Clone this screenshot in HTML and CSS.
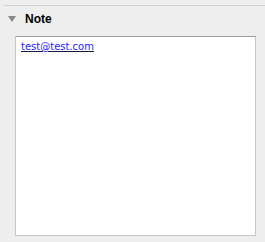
FILE: index.html
```html
<!DOCTYPE html>
<html lang="en">

<head>
  <meta charset="UTF-8" />
  <meta name="viewport" content="width=device-width, initial-scale=1.0" />
  <title>Note</title>
  <link rel="stylesheet" href="styles.css">
</head>

<body>
  <section class="panel">
    <div class="panel-head">
      <svg class="toggle" width="8" height="6" viewBox="0 0 8 6">
        <polygon points="0,0 8,0 4,6" fill="#8a8a8a" />
      </svg>
      <span class="panel-title">Note</span>
    </div>
    <div class="note-box">
      <a href="mailto:test@test.com">test@test.com</a>
    </div>
  </section>
</body>

</html>
```

FILE: styles.css
```css
body {
  background: #eeeeee;
  font-family: "Liberation Sans", Arial, sans-serif;
  margin: 0;
}

.panel {
  border-top: 1px solid #cfcfcf;
  margin: 5px 0 0 4px;
}

.panel-head {
  align-items: center;
  display: flex;
  height: 20px;
  padding: 3px 0 0 4px;
}

.toggle {
  display: block;
  margin-right: 9px;
}

.panel-title {
  color: #000;
  font-size: 12px;
  font-weight: 700;
}

.note-box {
  background: #fff;
  border: 1px solid #c6c6c6;
  border-top-color: #9a9a9a;
  box-sizing: border-box;
  height: 200px;
  line-height: 14px;
  margin: 7px 0 0 11px;
  padding: 1px 5px;
  width: 241px;
}

.note-box a {
  color: #2323ff;
  font-family: "DejaVu Sans", sans-serif;
  font-size: 10px;
  text-decoration-color: #1a1a40;
}
```
